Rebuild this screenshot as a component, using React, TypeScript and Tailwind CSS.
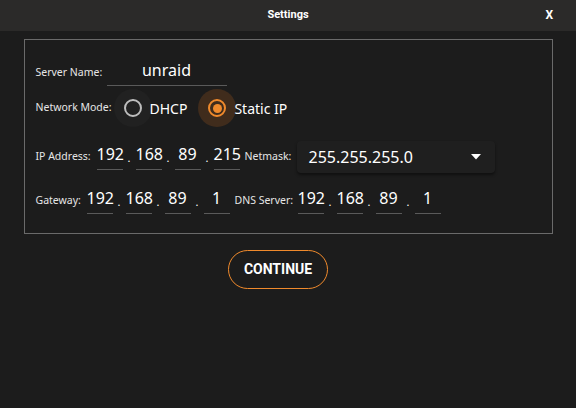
import React from "react";

const ORANGE = "#f08a2c";

function Field({ value, width = "w-[26px]" }: { value: string; width?: string }) {
  return (
    <div className={`${width} h-[26px] flex-none border-b border-[#5a5a5a] text-center text-[16px] leading-[20px] text-white`}>
      {value}
    </div>
  );
}

function IpInput({ parts }: { parts: string[] }) {
  return (
    <div className="flex flex-none items-end">
      {parts.map((p, i) => (
        <React.Fragment key={i}>
          {i > 0 && <span className="w-[13px] pb-[7px] text-center text-[11px] leading-none text-white">.</span>}
          <Field value={p} />
        </React.Fragment>
      ))}
    </div>
  );
}

function Radio({ label, checked }: { label: string; checked?: boolean }) {
  return (
    <div className="flex flex-none items-center">
      <div
        className={`flex h-[38px] w-[38px] items-center justify-center rounded-full ${
          checked ? "bg-[#402c1c]" : "bg-[#212121]"
        }`}
      >
        {checked ? (
          <div className="flex h-[18px] w-[18px] items-center justify-center rounded-full border-2 border-[#f08a2c]">
            <div className="h-[9px] w-[9px] rounded-full bg-[#f08a2c]" />
          </div>
        ) : (
          <div className="h-[18px] w-[18px] rounded-full border-2 border-[#bdbdbd]" />
        )}
      </div>
      <span className="-ml-[2px] whitespace-nowrap text-[14px] text-white">{label}</span>
    </div>
  );
}

function Label({ text, className = "" }: { text: string; className?: string }) {
  return <span className={`flex-none whitespace-nowrap text-[10.5px] ${className}`}>{text}</span>;
}

export default function App() {
  return (
    <div
      className="h-[408px] w-[576px] bg-[#1c1c1c] text-[#e6e6e6]"
      style={{ fontFamily: '"Noto Sans", "Open Sans", sans-serif' }}
    >
      <header
        className="relative flex h-[31px] items-center justify-center bg-[#2b2a29] text-[11px] font-bold text-white"
        style={{ fontFamily: "Roboto, sans-serif" }}
      >
        Settings
        <span className="absolute right-[23px] top-[6px] text-[12px]">X</span>
      </header>

      <main className="flex flex-col items-center pt-2">
        <div className="w-[529px] border border-[#6a6a6a] px-[11px] pb-[19px] pt-5">
          <div className="flex items-center">
            <Label text="Server Name:" className="w-[71px]" />
            <Field value="unraid" width="w-[120px]" />
          </div>

          <div className="mt-[3px] flex h-[38px] items-center">
            <Label text="Network Mode:" className="w-[78px]" />
            <Radio label="DHCP" />
            <div className="w-[11px] flex-none" />
            <Radio label="Static IP" checked />
          </div>

          <div className="mt-[14px] flex h-8 items-center">
            <Label text="IP Address:" className="w-[61px]" />
            <IpInput parts={["192", "168", "89", "215"]} />
            <Label text="Netmask:" className="ml-[5px] w-[52px]" />
            <div className="flex h-8 w-[198px] flex-none items-center justify-between rounded-sm bg-[#1f1f1f] pl-3 pr-[14px] shadow-[0_2px_3px_rgba(0,0,0,0.45)]">
              <span className="text-[16px] text-white">255.255.255.0</span>
              <svg width="10" height="6" viewBox="0 0 10 6">
                <path d="M0 0 L10 0 L5 5.5 Z" fill="#ffffff" />
              </svg>
            </div>
          </div>

          <div className="mt-[15px] flex items-center">
            <Label text="Gateway:" className="w-[51px]" />
            <IpInput parts={["192", "168", "89", "1"]} />
            <Label text="DNS Server:" className="ml-[5px] w-[63px]" />
            <IpInput parts={["192", "168", "89", "1"]} />
          </div>
        </div>

        <button
          className="mr-5 mt-4 h-[39px] w-[100px] rounded-full border text-[14px] font-bold text-white"
          style={{ fontFamily: "Roboto, sans-serif", borderColor: ORANGE }}
        >
          CONTINUE
        </button>
      </main>
    </div>
  );
}
